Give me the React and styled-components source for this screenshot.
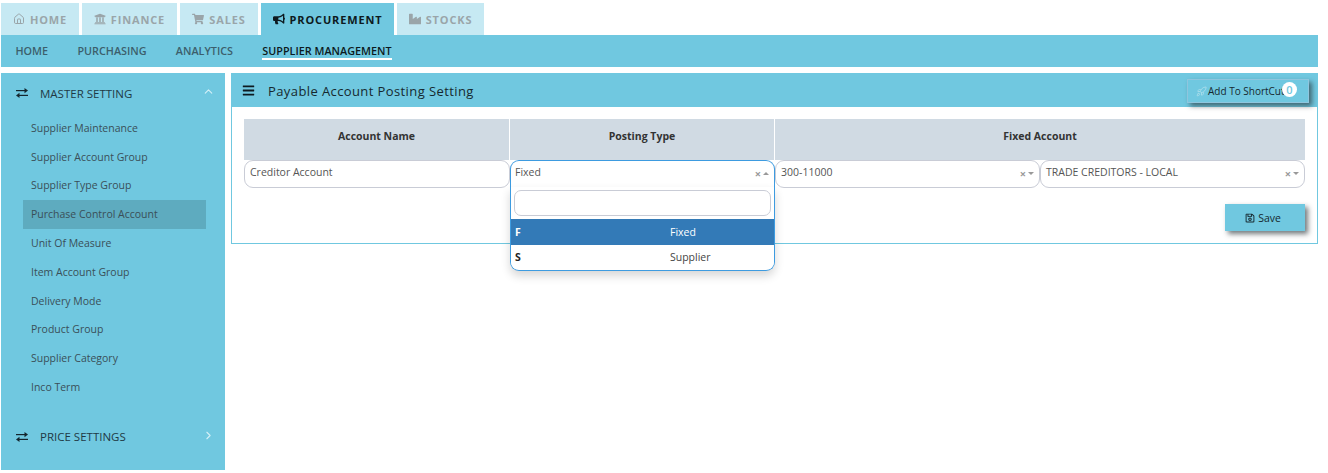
import React from "react";
import styled, { createGlobalStyle } from "styled-components";
import { FaUniversity, FaShoppingCart, FaBullhorn, FaIndustry, FaBars, FaRegSave } from "react-icons/fa";
import { LuChevronUp, LuChevronRight, LuHouse, LuRocket } from "react-icons/lu";

const Global = createGlobalStyle`
  html, body { margin: 0; padding: 0; background: #fff; }
  body { font-family: "Open Sans", "Noto Sans", sans-serif; font-size: 11px; color: #333; }
  * { box-sizing: border-box; }
`;
const Page = styled.div`
  width: 1328px; height: 473px; padding: 3px 10px 3px 1px; overflow: hidden;
`;
const Tabs = styled.div`display: flex; gap: 3px; height: 32px;`;
const Tab = styled.div`
  width: ${p => p.$w}px; display: flex; align-items: center; justify-content: center; gap: 5px;
  font-size: 11px; font-weight: 700; letter-spacing: 0.85px;
  background: ${p => p.$active ? "#70c8e0" : "#c6e9f3"};
  color: ${p => p.$active ? "#0d1a20" : "#9aa5a9"};
  svg { width: 12px; height: 12px; }
`;
const SubNav = styled.div`
  height: 32px; background: #70c8e0; display: flex; align-items: center; gap: 29.3px; padding: 0 14.5px;
`;
const SubItem = styled.div`
  font-size: 10.8px; font-weight: 600; line-height: 14px; padding-top: 1px;
  color: ${p => p.$active ? "#0d1a20" : "#3c5f6c"};
  border-bottom: 2px solid ${p => p.$active ? "#fff" : "transparent"};
`;
const Body = styled.div`display: flex; gap: 6px; margin-top: 6px;`;
const Sidebar = styled.div`width: 224px; height: 397px; background: #70c8e0; flex: none;`;
const Group = styled.div`
  display: flex; align-items: center; height: 40.5px; padding: 0 10px 0 15px; color: #1f3a45; font-size: 11.5px;
  margin-top: ${p => p.$mt || 0}px;
  > svg:first-child { width: 12px; height: 10px; margin-right: 12px; color: #14262e; }
  span { flex: 1; }
`;
const Chevron = styled.div`
  color: #d4f0f7; display: flex; margin-top: -3px;
  svg { width: 13px; height: 13px; }
`;
const Items = styled.div`display: flex; flex-direction: column; padding-left: 22px;`;
const Item = styled.div`
  width: 183px; height: 28.8px; display: flex; align-items: center; padding-left: 8px;
  font-size: 10.5px; color: #3a4f58;
  background: ${p => p.$active ? "#5eabbf" : "transparent"};
`;
const Panel = styled.div`
  width: 1087px; height: 171px; border: 1px solid #70c8e0; border-top: 0; position: relative;
`;
const PanelHead = styled.div`
  margin: 0 -1px; height: 34px; background: #70c8e0; display: flex; align-items: center; padding: 2px 10px 0 11px;
  color: #16282f; font-size: 13px; letter-spacing: 0.4px; position: relative;
  > svg { width: 13px; height: 13px; margin: -2px 13px 0 0; color: #0d1a20; }
`;
const Shortcut = styled.div`
  position: absolute; left: 956px; top: 6px; width: 122px; height: 24px;
  border: 1px solid #8fc6de; background: #70c8e0; box-shadow: 3px 3px 5px rgba(40,50,55,.65);
  display: flex; align-items: center; padding-left: 8px; gap: 1px; font-size: 10px; letter-spacing: 0; color: #16282f;
  svg { width: 11px; height: 11px; color: #a6dcea; }
`;
const Badge = styled.div`
  position: absolute; right: 11px; top: 2px; width: 15px; height: 15px; border-radius: 50%;
  background: #fff; color: #70c8e0; font-size: 11px; font-weight: 600; display: flex; align-items: center; justify-content: center;
`;
const Content = styled.div`padding: 12px 12px 0 12px;`;
const HeadRow = styled.div`display: grid; grid-template-columns: 266px 265px 1fr; height: 41px;`;
const HeadCell = styled.div`
  background: #d0dae3; display: flex; align-items: center; justify-content: center; padding-bottom: 8px;
  font-weight: 700; font-size: 10.5px; color: #333; border-right: 1px solid #fff;
  &:last-child { border-right: 0; }
`;
const Row = styled.div`display: grid; grid-template-columns: 266px repeat(3, 265px); height: 28px;`;
const Field = styled.div`
  height: 28px; background: #fff; border-radius: 9px; display: flex; align-items: center;
  padding: 0 5px 4px 5px; font-size: 10.5px; color: #555; position: relative;
  border: 1px solid ${p => p.$focus ? "#3d9be0" : "#c9ccd6"};
  ${p => p.$focus ? "border-bottom-left-radius: 0; border-bottom-right-radius: 0; border-bottom-color: transparent; padding-left: 4px;" : ""}
  span { flex: 1; }
`;
const Marks = styled.div`
  display: flex; align-items: center; gap: 2px; color: #999; font-size: 11px; font-weight: 700; margin-top: 2px;
`;
const Arrow = styled.i`
  width: 0; height: 0; border-left: 3px solid transparent; border-right: 3px solid transparent; margin-top: 1px;
  ${p => p.$up ? "border-bottom: 3px solid #999;" : "border-top: 3px solid #999;"}
`;
const Dropdown = styled.div`
  position: absolute; left: -1px; right: -1px; top: 26px; height: 84px; background: #fff;
  border: 1px solid #3d9be0; border-top: 0; border-radius: 0 0 9px 9px;
  box-shadow: 0 5px 10px rgba(0,0,0,.16); padding-top: 3px; z-index: 5; overflow: hidden;
`;
const Search = styled.div`
  height: 26px; margin: 0 3px; border: 1px solid #c9ccd6; border-radius: 7px; background: #fff;
`;
const Option = styled.div`
  height: ${p => p.$h}px; display: grid; grid-template-columns: 155px 1fr; align-items: center; padding-left: 4px; margin-top: ${p => p.$mt || 0}px;
  font-size: 10.5px; background: ${p => p.$active ? "#337ab7" : "#fff"}; color: ${p => p.$active ? "#fff" : "#444"};
  b { color: ${p => p.$active ? "#fff" : "#222"}; }
`;
const Actions = styled.div`display: flex; justify-content: flex-end; margin-top: 16px;`;
const Save = styled.div`
  width: 80px; height: 27px; background: #70c8e0; display: flex; align-items: center; justify-content: center; gap: 3px; padding-right: 4px;
  font-size: 10.5px; color: #16282f; box-shadow: 3px 3px 5px rgba(40,50,55,.65);
  svg { width: 10px; height: 10px; }
`;

const Sel = ({ children }) => (
  <Field><span>{children}</span><Marks>×<Arrow /></Marks></Field>
);

const Exchange = () => (
  <svg viewBox="0 0 12 10" fill="currentColor" aria-hidden="true">
    <rect x="0" y="2" width="9" height="1.2" />
    <path d="M8.5 0 L12 2.6 L8.5 5.2 Z" />
    <rect x="3" y="6.8" width="9" height="1.2" />
    <path d="M3.5 4.8 L0 7.4 L3.5 10 Z" />
  </svg>
);

const items = ["Supplier Maintenance", "Supplier Account Group", "Supplier Type Group", "Purchase Control Account", "Unit Of Measure", "Item Account Group", "Delivery Mode", "Product Group", "Supplier Category", "Inco Term"];

export default function App() {
  return (
    <Page>
      <Global />
      <Tabs>
        <Tab $w={78}><LuHouse />HOME</Tab>
        <Tab $w={95}><FaUniversity />FINANCE</Tab>
        <Tab $w={78}><FaShoppingCart />SALES</Tab>
        <Tab $w={133} $active><FaBullhorn />PROCUREMENT</Tab>
        <Tab $w={87}><FaIndustry />STOCKS</Tab>
      </Tabs>
      <SubNav>
        <SubItem>HOME</SubItem>
        <SubItem>PURCHASING</SubItem>
        <SubItem>ANALYTICS</SubItem>
        <SubItem $active>SUPPLIER MANAGEMENT</SubItem>
      </SubNav>
      <Body>
        <Sidebar>
          <Group><Exchange /><span>MASTER SETTING</span><Chevron><LuChevronUp /></Chevron></Group>
          <Items>
            {items.map(t => <Item key={t} $active={t === "Purchase Control Account"}>{t}</Item>)}
          </Items>
          <Group $mt={15}><Exchange /><span>PRICE SETTINGS</span><Chevron><LuChevronRight /></Chevron></Group>
        </Sidebar>
        <Panel>
          <PanelHead>
            <FaBars />Payable Account Posting Setting
            <Shortcut><LuRocket />Add To ShortCut<Badge>0</Badge></Shortcut>
          </PanelHead>
          <Content>
            <HeadRow>
              <HeadCell>Account Name</HeadCell>
              <HeadCell>Posting Type</HeadCell>
              <HeadCell>Fixed Account</HeadCell>
            </HeadRow>
            <Row>
              <Field><span>Creditor Account</span></Field>
              <Field $focus>
                <span>Fixed</span><Marks>×<Arrow $up /></Marks>
                <Dropdown>
                  <Search />
                  <Option $active $mt={3} $h={26}><b>F</b>Fixed</Option>
                  <Option $h={24}><b>S</b>Supplier</Option>
                </Dropdown>
              </Field>
              <Sel>300-11000</Sel>
              <Sel>TRADE CREDITORS - LOCAL</Sel>
            </Row>
            <Actions><Save><FaRegSave />Save</Save></Actions>
          </Content>
        </Panel>
      </Body>
    </Page>
  );
}
